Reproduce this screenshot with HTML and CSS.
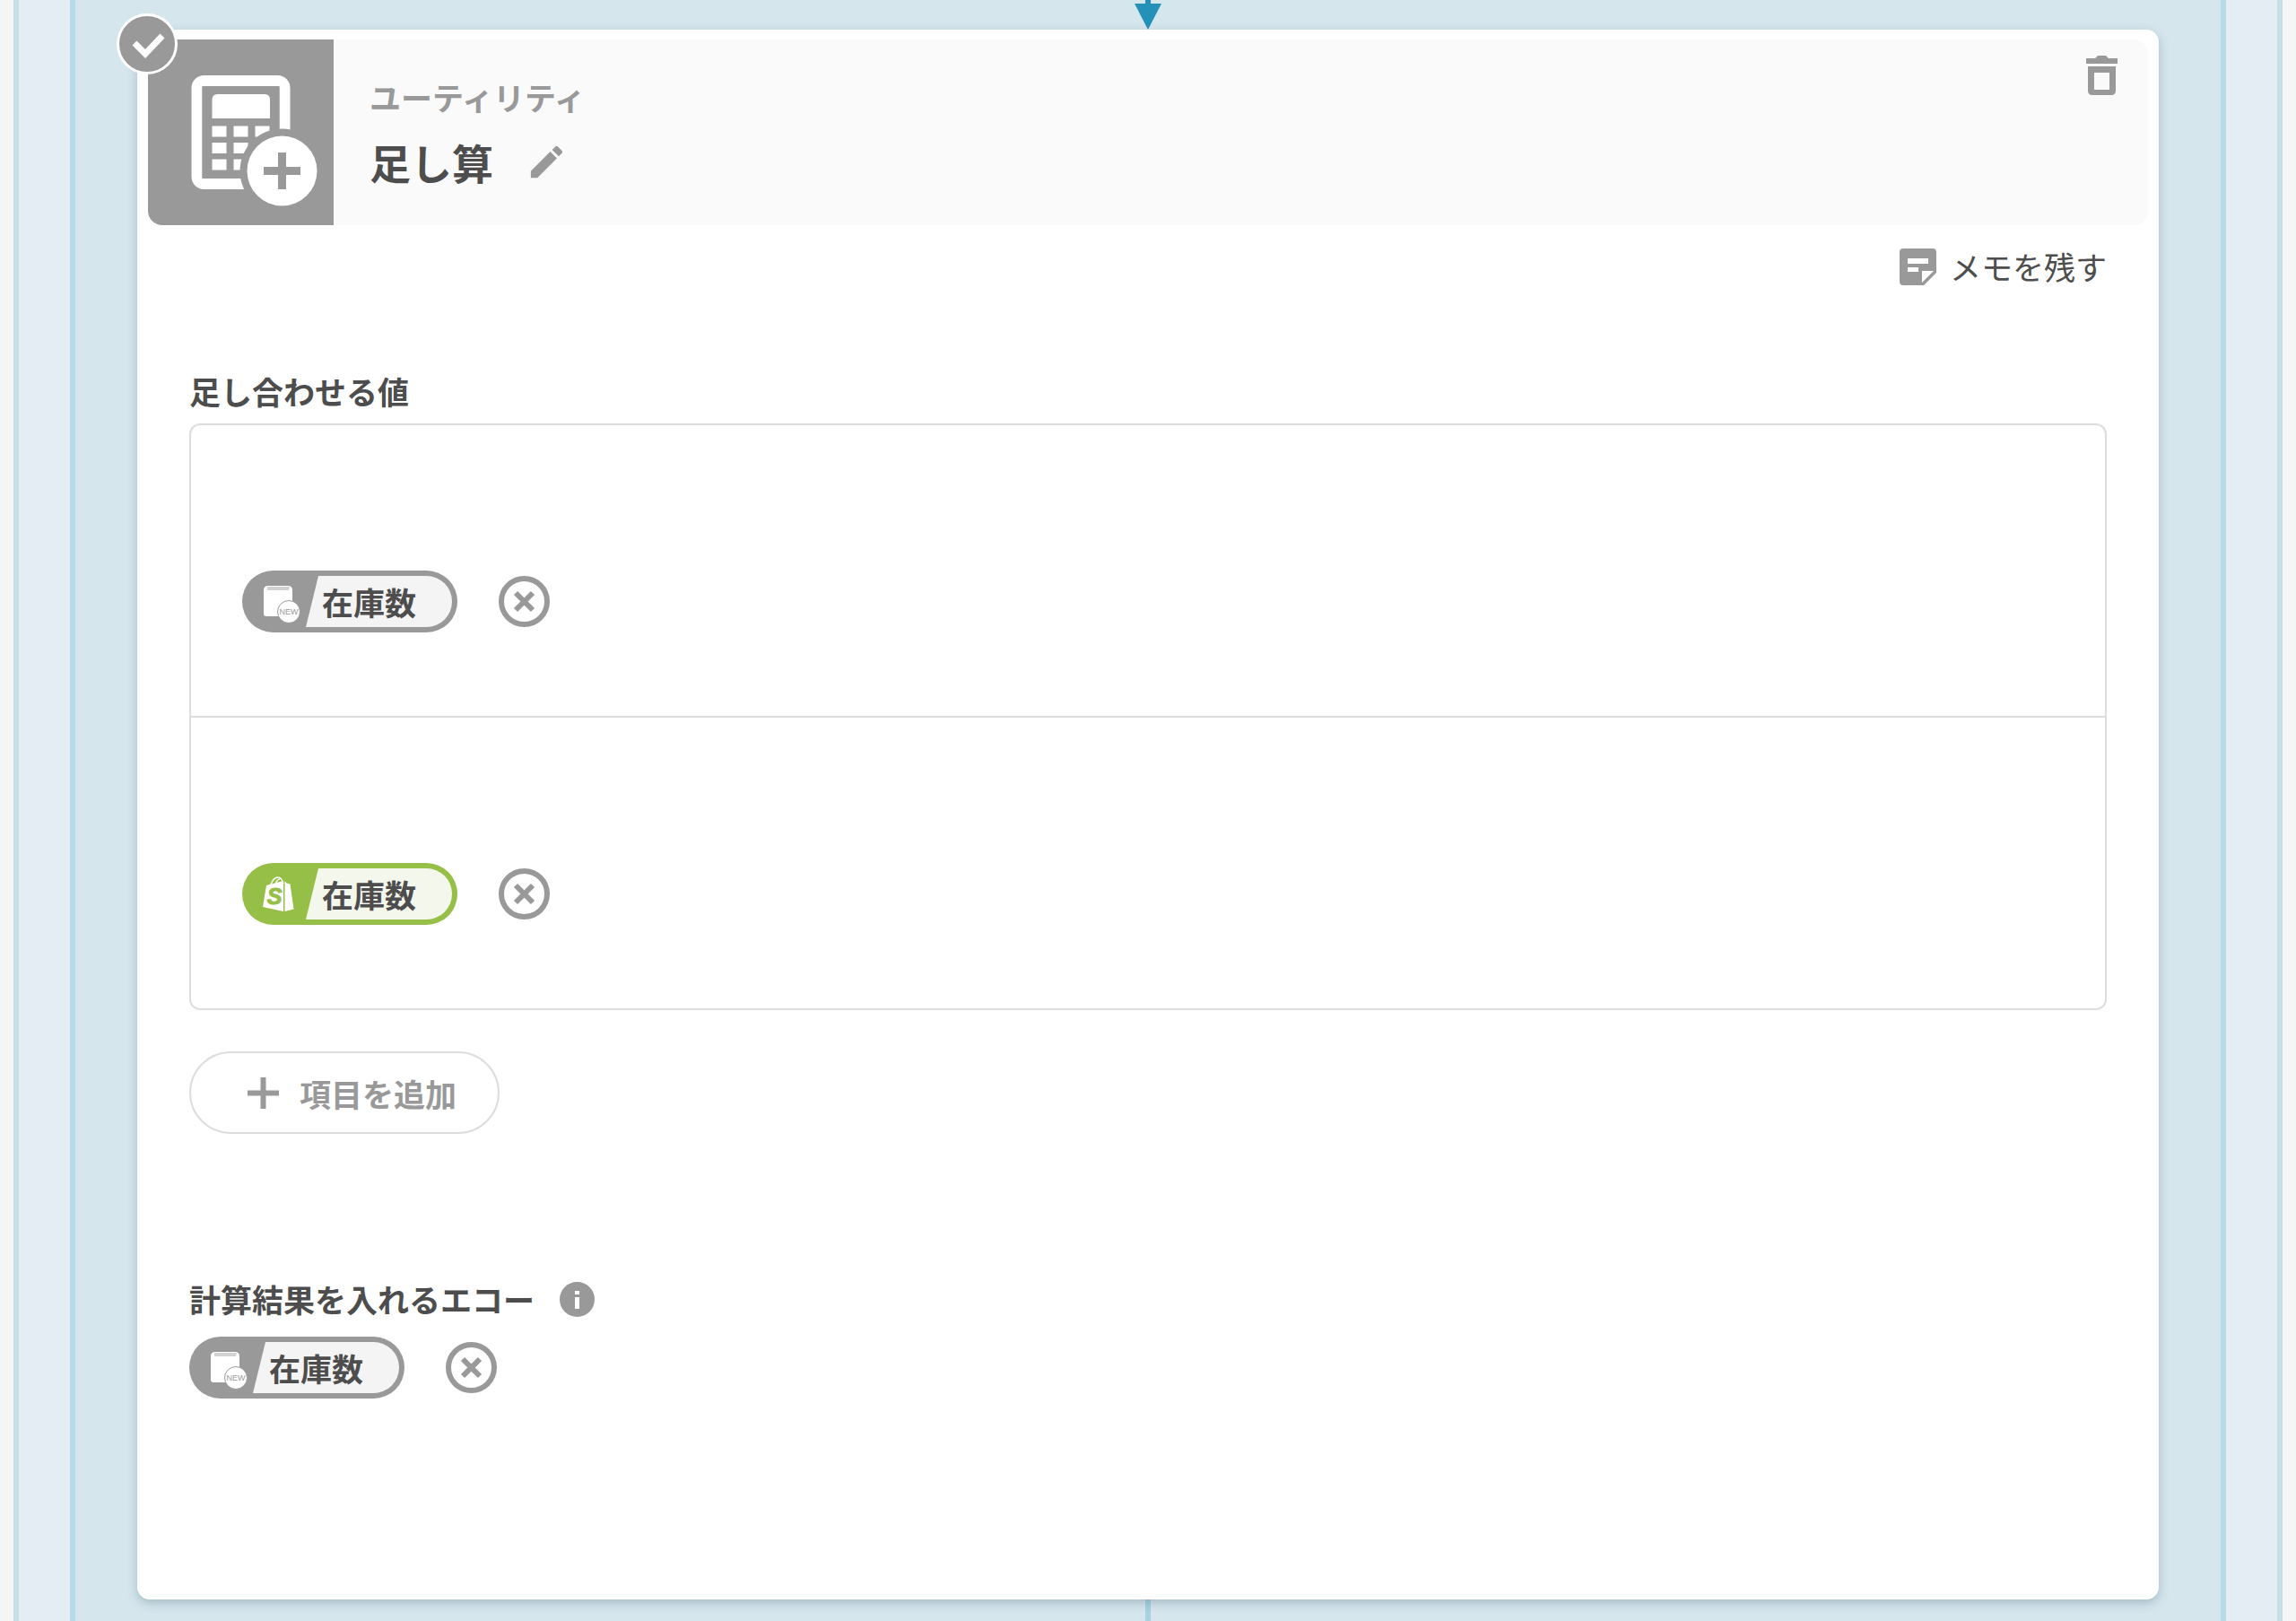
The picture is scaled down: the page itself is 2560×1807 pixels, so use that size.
FILE: index.html
```html
<!DOCTYPE html>
<html lang="ja">
<head>
    <meta charset="UTF-8">
    <meta name="viewport" content="width=device-width, initial-scale=1.0">
    <title>足し算</title>
    <link rel="stylesheet" href="styles.css">
</head>
<body>
    <div class="outer">
        <div class="inner">
            <svg class="arrow" viewBox="0 0 30 33" width="30" height="33">
                <path d="M12 0h6v4h12L15 33 0 4h12z" fill="#2492b8"/>
            </svg>

            <main class="card">
                <span class="badge">
                    <svg viewBox="0 0 62 62" width="62" height="62">
                        <path d="M17 30l12 12 19-20" fill="none" stroke="#fff" stroke-width="7"/>
                    </svg>
                </span>

                <header class="head">
                    <svg class="tile" viewBox="0 0 207 207" width="207" height="207">
                        <rect x="54.5" y="46" width="98" height="115" rx="8" fill="none" stroke="#fff" stroke-width="12"/>
                        <path d="M60.500 52h86v103h-86z" fill="#999"/>
                        <path d="M71.500 88V67q0-6 6-6h52.500q6 0 6 6v21z" fill="#fff"/>
                        <path d="M71.500 96.500h16v12h-16zM95.500 96.500h16v12h-16zM119.500 96.500h16v12h-16zM71.500 115h16v12h-16zM95.500 115h16v12h-16zM71.500 133.500h16v12h-16zM95.500 133.500h16v12h-16z" fill="#fff"/>
                        <circle cx="149.500" cy="146.500" r="47" fill="#999"/>
                        <circle cx="149.500" cy="146.500" r="39" fill="#fff"/>
                        <path d="M129 146.500h41M149.500 126v41" stroke="#999" stroke-width="9"/>
                    </svg>
                    <div class="titles">
                        <p class="category">ユーティリティ</p>
                        <div class="title-row">
                            <h1>足し算</h1>
                            <button class="icon-btn" aria-label="名前を編集">
                                <svg viewBox="0 0 24 24" width="47" height="47" fill="#999">
                                    <path d="M3 17.250V21h3.750L17.810 9.940l-3.750-3.750L3 17.250zM20.710 7.040c.39-.39.39-1.020 0-1.410l-2.340-2.340c-.39-.39-1.020-.39-1.410 0l-1.830 1.830 3.750 3.750 1.830-1.830z"/>
                                </svg>
                            </button>
                        </div>
                    </div>
                    <button class="icon-btn trash" aria-label="削除">
                        <svg viewBox="0 0 35 44" width="35" height="44">
                            <path d="M10 3l3-3h9l3 3h10v6H0V3z" fill="#999"/>
                            <path d="M2 12h31v27q0 5-5 5H7q-5 0-5-5zM9 19v19h17V19z" fill="#999" fill-rule="evenodd"/>
                        </svg>
                    </button>
                </header>

                <div class="body">
                    <button class="memo">
                        <svg viewBox="0 0 41 41" width="41" height="41">
                            <path d="M4 0h33q4 0 4 4v23L27 41H4q-4 0-4-4V4q0-4 4-4zM9 11v6h23v-6zM9 21v5h12v-5zM25 25v13l13-13z" fill="#999" fill-rule="evenodd"/>
                        </svg>
                        メモを残す
                    </button>

                    <h2>足し合わせる値</h2>
                    <ul class="values">
                        <li class="value">
                            <span class="chip">
                                <svg viewBox="0 0 71 69" width="71" height="69">
                                    <path d="M24 22q0-5 5-5h22q5 0 5 5v29H27q-3 0-3-3z" fill="#fff"/>
                                    <path d="M28 18h25l-1 4H28z" fill="#d2d2d2"/>
                                    <circle cx="52" cy="46" r="12.500" fill="#fff" stroke="#999"/>
                                    <text x="52" y="49" text-anchor="middle" class="new">NEW</text>
                                </svg>
                                <span class="chip-text">在庫数</span>
                            </span>
                            <button class="remove" aria-label="外す">
                                <svg viewBox="0 0 45 45" width="45" height="45"><path d="M13 13l19 19M32 13L13 32" stroke="#999" stroke-width="6"/></svg>
                            </button>
                        </li>
                        <li class="value">
                            <span class="chip green">
                                <svg viewBox="0 0 71 69" width="71" height="69">
                                    <path d="M32 24q3-8 8-8 4 0 6 7M37 24q2-6 5-6" fill="none" stroke="#fff" stroke-width="1.500"/>
                                    <path d="M27 25l19-5v34l-23-5z" fill="#fff"/>
                                    <path d="M47.500 20l2 2.500 4 1 4 28-10 2.500z" fill="#fff"/>
                                    <text x="36" y="46" text-anchor="middle" class="bag-letter">S</text>
                                </svg>
                                <span class="chip-text">在庫数</span>
                            </span>
                            <button class="remove" aria-label="外す">
                                <svg viewBox="0 0 45 45" width="45" height="45"><path d="M13 13l19 19M32 13L13 32" stroke="#999" stroke-width="6"/></svg>
                            </button>
                        </li>
                    </ul>

                    <button class="add">
                        <svg viewBox="0 0 35 35" width="35" height="35"><path d="M0 17.500h35M17.500 0v35" stroke="#999" stroke-width="6"/></svg>
                        項目を追加
                    </button>

                    <div class="label-row">
                        <h2>計算結果を入れるエコー</h2>
                        <button class="icon-btn" aria-label="説明">
                            <svg viewBox="0 0 39 39" width="39" height="39">
                                <circle cx="19.500" cy="19.500" r="19.500" fill="#999"/>
                                <path d="M17 10h5v4h-5zM17 17h5v13h-5z" fill="#fff"/>
                            </svg>
                        </button>
                    </div>
                    <div class="result">
                        <span class="chip">
                            <svg viewBox="0 0 71 69" width="71" height="69">
                                <path d="M24 22q0-5 5-5h22q5 0 5 5v29H27q-3 0-3-3z" fill="#fff"/>
                                <path d="M28 18h25l-1 4H28z" fill="#d2d2d2"/>
                                <circle cx="52" cy="46" r="12.500" fill="#fff" stroke="#999"/>
                                <text x="52" y="49" text-anchor="middle" class="new">NEW</text>
                            </svg>
                            <span class="chip-text">在庫数</span>
                        </span>
                        <button class="remove" aria-label="外す">
                            <svg viewBox="0 0 45 45" width="45" height="45"><path d="M13 13l19 19M32 13L13 32" stroke="#999" stroke-width="6"/></svg>
                        </button>
                    </div>
                </div>
            </main>

            <div class="line"></div>
        </div>
    </div>
</body>
</html>
```
FILE: styles.css
```css
* { box-sizing: border-box; }
body { margin: 0; padding: 0 15px; background: #f4f6f6; color: #4d4d4d; font-family: "Noto Sans CJK JP", sans-serif; font-size: 35px; }
h1, h2, p, ul { margin: 0; padding: 0; }
svg { display: block; flex: none; }
button { margin: 0; padding: 0; border: none; background: none; color: inherit; font: inherit; cursor: pointer; }

/* nested loop frames */
.outer { padding: 0 57px; background: #e4edf4; border: solid #c5dfe9; border-width: 0 6px; }
.inner { display: flex; flex-direction: column; align-items: center; min-height: 100vh; padding: 0 69px; background: #d5e6ed; border: solid #b8d9e6; border-width: 0 6px; }
.line { width: 6px; flex: 1; background: #a9d2e0; }

.card { position: relative; width: 100%; padding: 11px 12px 224px; background: #fff; border-radius: 14px; box-shadow: 0 4px 12px rgba(60, 90, 110, 0.3); }
.badge { position: absolute; top: -18px; left: -23px; width: 68px; height: 68px; border: 3px solid #fff; border-radius: 50%; background: #999; }

.head { display: flex; height: 207px; background: #fafafa; border-radius: 16px; overflow: hidden; }
.tile { background: #999; }
.titles { flex: 1; padding: 38px 40px 0; }
.category { line-height: 52px; color: #999; font-weight: bold; }
.title-row { display: flex; align-items: center; gap: 36px; height: 92px; }
h1 { font-size: 46px; line-height: 68px; }
.trash { align-self: flex-start; padding: 18px 34px 0 0; }

.body { display: flex; flex-direction: column; align-items: flex-start; padding: 20px 46px 0; }
.memo { display: flex; align-items: center; gap: 15px; align-self: flex-end; line-height: 52px; }
h2 { font-size: 35px; line-height: 52px; }
.body > h2 { margin: 87px 0 10px; }

.values { width: 100%; list-style: none; border: 2px solid #ddd; border-radius: 12px; }
.value { display: flex; align-items: center; gap: 46px; padding: 162px 57px 93px; }
.value + .value { border-top: 2px solid #ddd; }
.chip { display: flex; height: 69px; padding-right: 6px; border-radius: 35px; background: #999; align-items: center; }
.chip-text { height: 57px; padding: 0 40px 0 18px; border-radius: 0 29px 29px 0; background: #f4f4f4; font-weight: bold; line-height: 57px; clip-path: polygon(14px 0, 100% 0, 100% 100%, 0 100%); }
.green { background: #96bf48; }
.green .chip-text { background: #f4f7ec; }
.new { fill: #999; font: 9px "Liberation Sans", sans-serif; }
.bag-letter { fill: #96bf48; stroke: #96bf48; font: italic bold 25px "Liberation Sans", sans-serif; }
.remove { width: 57px; height: 57px; border: 6px solid #999; border-radius: 50%; }

.add { display: flex; align-items: center; gap: 23px; height: 92px; margin: 46px 0 158px; padding: 0 46px 0 63px; border: 2px solid #ddd; border-radius: 46px; color: #999; font-weight: bold; }
.label-row { display: flex; align-items: center; gap: 28px; }
.result { display: flex; align-items: center; gap: 46px; margin-top: 16px; }
```
